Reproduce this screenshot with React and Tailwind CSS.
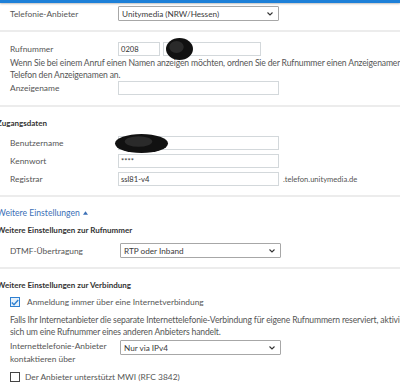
import React from "react";

function Divider({ className = "" }) {
  return <div className={`h-[2px] bg-[#ececec] ${className}`} />;
}

function TextInput({ value, className = "w-[161px]" }) {
  return (
    <div
      className={`h-[14px] border border-[#d3d8db] bg-white text-[7.6px] leading-[12px] px-[2px] text-[#333] ${className}`}
    >
      {value}
    </div>
  );
}

function Select({ value }) {
  return (
    <div className="h-[15px] w-[161px] border border-[#a7a7a7] rounded-[1px] bg-white flex items-center justify-between pl-[3px] pr-[5px] text-[8.2px] text-[#3a3a3a]">
      <span>{value}</span>
      <svg width="6" height="4" viewBox="0 0 6 4" className="mt-[1px]">
        <path d="M0.5 0.5 L3 3 L5.5 0.5" fill="none" stroke="#333" strokeWidth="1.1" />
      </svg>
    </div>
  );
}

function Row({ label, children, className = "", labelWidth = "w-[118px]" }) {
  return (
    <div className={`flex items-center ${className}`}>
      <div className={`${labelWidth} shrink-0 pl-[10px] whitespace-nowrap`}>{label}</div>
      {children}
    </div>
  );
}

function Heading({ children, className = "" }) {
  return (
    <div className={`-ml-[3px] font-bold text-[8px] text-[#333] leading-[12px] whitespace-nowrap ${className}`}>
      {children}
    </div>
  );
}

function Blob({ className, w, h }) {
  return (
    <svg width={w} height={h} viewBox={`0 0 ${w} ${h}`} className={`absolute ${className}`}>
      <ellipse cx={w / 2} cy={h / 2} rx={w / 2 - 1} ry={h / 2 - 1} fill="#111" />
      <ellipse cx={w / 2 - 3} cy={h / 2 - 2} rx={w / 4} ry={h / 4} fill="#2a2a2a" />
    </svg>
  );
}

export default function App() {
  return (
    <div className="relative w-[400px] h-[390px] overflow-hidden bg-white font-['Lato',sans-serif] text-[8.4px] text-[#555] leading-[12px]">
      <div className="h-[3px] bg-[#1d80d8] shadow-[0_1px_2px_rgba(0,0,0,0.25)]" />

      <Row label="Telefonie-Anbieter" className="mt-[3px]">
        <Select value="Unitymedia (NRW/Hessen)" />
      </Row>
      <Divider className="mt-[9px]" />

      <div className="relative">
        <Row label="Rufnummer" className="mt-[10px]">
          <TextInput value="0208" className="w-[42px]" />
          <TextInput value="" className="w-[98px] ml-[3px]" />
        </Row>
        <Blob className="left-[165px] top-[-5px]" w={29} h={24} />
      </div>
      <div className="pl-[10px] mt-[1px] whitespace-nowrap text-[8.6px] tracking-[-0.15px]">
        Wenn Sie bei einem Anruf einen Namen anzeigen möchten, ordnen Sie der Rufnummer einen Anzeigenamen zu, der
        <br />
        Telefon den Anzeigenamen an.
      </div>
      <Row label="Anzeigename">
        <TextInput value="" />
      </Row>
      <Divider className="mt-[10px]" />

      <Heading className="mt-[10px]">Zugangsdaten</Heading>
      <div className="relative">
        <Row label="Benutzername" className="mt-[7px]">
          <TextInput value="" />
        </Row>
        <Blob className="left-[114px] top-[-3px]" w={55} h={21} />
      </div>
      <Row label="Kennwort" className="mt-[4px]">
        <TextInput value="****" />
      </Row>
      <Row label="Registrar" className="mt-[4px]">
        <TextInput value="ssl81-v4" />
        <span className="ml-[4px] text-[7.6px]">.telefon.unitymedia.de</span>
      </Row>
      <Divider className="mt-[9px]" />

      <div className="-ml-[3px] mt-[10px] text-[#3b6fb6] text-[8.6px] flex items-center gap-[3px] leading-[12px]">
        Weitere Einstellungen
        <svg width="5" height="4" viewBox="0 0 6 4">
          <path d="M0 4 L3 0 L6 4 Z" fill="#3b6fb6" />
        </svg>
      </div>
      <Heading className="mt-[5px]">Weitere Einstellungen zur Rufnummer</Heading>
      <Row label="DTMF-Übertragung" className="mt-[7px]" labelWidth="w-[120px]">
        <Select value="RTP oder Inband" />
      </Row>
      <Divider className="mt-[9px]" />

      <Heading className="mt-[10px]">Weitere Einstellungen zur Verbindung</Heading>
      <div className="flex items-center mt-[5px] pl-[10px] gap-[7px]">
        <div className="w-[10px] h-[10px] border border-[#2f80d1] bg-[#e6f1fb] flex items-center justify-center">
          <svg width="8" height="7" viewBox="0 0 8 7">
            <path d="M0.8 3.6 L3 5.8 L7.2 1" fill="none" stroke="#2f80d1" strokeWidth="1.4" />
          </svg>
        </div>
        <span>Anmeldung immer über eine Internetverbindung</span>
      </div>
      <div className="pl-[10px] mt-[6px] whitespace-nowrap text-[8.6px] tracking-[-0.15px]">
        Falls Ihr Internetanbieter die separate Internettelefonie-Verbindung für eigene Rufnummern reserviert, aktivieren
        <br />
        sich um eine Rufnummer eines anderen Anbieters handelt.
      </div>
      <div className="flex items-start mt-[2px]">
        <div className="w-[120px] shrink-0 pl-[10px] leading-[13px] whitespace-nowrap">
          Internettelefonie-Anbieter
          <br />
          kontaktieren über
        </div>
        <Select value="Nur via IPv4" />
      </div>
      <div className="flex items-center mt-[5px] pl-[10px] gap-[5px]">
        <div className="w-[10px] h-[10px] border border-[#444] bg-white" />
        <span>Der Anbieter unterstützt MWI (RFC 3842)</span>
      </div>
    </div>
  );
}
